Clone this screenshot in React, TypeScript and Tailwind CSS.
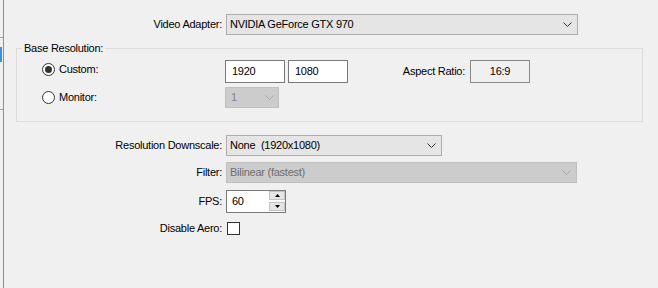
import React from 'react';

const Chevron = ({ disabled = false }: { disabled?: boolean }) => (
  <svg width="9" height="5" viewBox="0 0 9 5" className="shrink-0">
    <polyline
      points="0.5,0.5 4.5,4.5 8.5,0.5"
      fill="none"
      stroke={disabled ? '#a8a8a8' : '#333333'}
      strokeWidth="1"
    />
  </svg>
);

const Combo = ({ text, width, disabled = false }: { text: string; width: string; disabled?: boolean }) => (
  <div
    className={`flex h-[21px] items-center justify-between border pl-[3px] pr-[5px] ${width} ${
      disabled ? 'border-[#bfbfbf] bg-[#cccccc] text-[#6d6d6d]' : 'border-[#adadad] bg-[#e5e5e5] text-black'
    }`}
  >
    <span className="whitespace-pre">{text}</span>
    <Chevron disabled={disabled} />
  </div>
);

const Radio = ({ checked }: { checked: boolean }) => (
  <div className="flex h-[13px] w-[13px] items-center justify-center rounded-full border border-[#333333] bg-white">
    {checked && <div className="h-[7px] w-[7px] rounded-full bg-[#333333]" />}
  </div>
);

const Label = ({ children }: { children: React.ReactNode }) => (
  <div className="w-[218px] text-right whitespace-nowrap">{children}</div>
);

const SpinArrow = ({ up }: { up: boolean }) => (
  <div className="flex h-[9px] w-[16px] items-center justify-center border border-[#c4c4c4] bg-[#e5e5e5]">
    <svg width="5" height="3" viewBox="0 0 5 3">
      <polygon points={up ? '2.5,0 5,3 0,3' : '0,0 5,0 2.5,3'} fill="#000" />
    </svg>
  </div>
);

export default function App() {
  return (
    <div className="flex h-[288px] w-[658px] overflow-hidden bg-[#f0f0f0] font-['Liberation_Sans',Arial,sans-serif] text-[11px] leading-[13px] tracking-[-0.25px] text-black">
      {/* edge of neighbouring panel */}
      <div className="flex w-[3px] flex-col">
        <div className="h-[37px]" />
        <div className="h-px w-[3px] bg-[#a0a0a0]" />
        <div className="h-[9px]" />
        <div className="h-[15px] w-[2px] bg-[#3b8fe0]" />
        <div className="h-[47px]" />
        <div className="h-px w-[3px] bg-[#a0a0a0]" />
      </div>
      <div className="w-px bg-[#8f8f8f]" />

      <div className="flex flex-1 flex-col pt-[14px]">
        {/* Video Adapter */}
        <div className="flex h-[21px] items-center">
          <Label>Video Adapter:</Label>
          <div className="ml-[4px]">
            <Combo text="NVIDIA GeForce GTX 970" width="w-[352px]" />
          </div>
        </div>

        {/* Base Resolution group */}
        <div className="relative ml-[12px] mt-[13px] h-[74px] w-[627px] border border-[#dcdcdc] pt-[11px]">
          <div className="absolute -top-[7px] left-[5px] bg-[#f0f0f0] px-[2px]">Base Resolution:</div>

          <div className="flex h-[23px] items-center">
            <div className="mb-[4px] flex w-[208px] items-center gap-[4px] pl-[25px]">
              <Radio checked />
              <span>Custom:</span>
            </div>
            <div className="flex h-[23px] w-[60px] items-center border border-[#7a7a7a] bg-white pl-[6px]">1920</div>
            <div className="ml-[3px] flex h-[23px] w-[60px] items-center border border-[#7a7a7a] bg-white pl-[6px]">1080</div>
            <div className="w-[117px] text-right">Aspect Ratio:</div>
            <div className="ml-[5px] flex h-[23px] w-[60px] items-center justify-center border border-[#8a8a8a] bg-[#f0f0f0]">
              16:9
            </div>
          </div>

          <div className="mt-[4px] flex h-[21px] items-center">
            <div className="flex w-[208px] items-center gap-[4px] pl-[25px]">
              <Radio checked={false} />
              <span>Monitor:</span>
            </div>
            <div className="flex h-[21px] w-[54px] items-center justify-between border border-[#bfbfbf] bg-[#cccccc] pl-[5px] pr-[4px] text-[#838383]">
              <span>1</span>
              <Chevron disabled />
            </div>
          </div>
        </div>

        {/* Resolution Downscale */}
        <div className="mt-[13px] flex h-[21px] items-center">
          <Label>Resolution Downscale:</Label>
          <div className="ml-[4px]">
            <Combo text="None  (1920x1080)" width="w-[216px]" />
          </div>
        </div>

        {/* Filter */}
        <div className="mt-[6px] flex h-[21px] items-center">
          <Label>Filter:</Label>
          <div className="ml-[4px]">
            <Combo text="Bilinear (fastest)" width="w-[351px]" disabled />
          </div>
        </div>

        {/* FPS */}
        <div className="mt-[7px] flex h-[23px] items-center">
          <Label>FPS:</Label>
          <div className="ml-[4px] flex h-[23px] w-[60px] items-start border border-[#7a7a7a] bg-white">
            <span className="flex-1 pl-[5px] pt-[4px]">60</span>
            <div className="flex flex-col gap-[2px]">
              <SpinArrow up />
              <SpinArrow up={false} />
            </div>
          </div>
        </div>

        {/* Disable Aero */}
        <div className="mt-[9px] flex h-[13px] items-center">
          <Label>Disable Aero:</Label>
          <div className="ml-[5px] h-[13px] w-[13px] border border-[#333333] bg-white" />
        </div>
      </div>
    </div>
  );
}
